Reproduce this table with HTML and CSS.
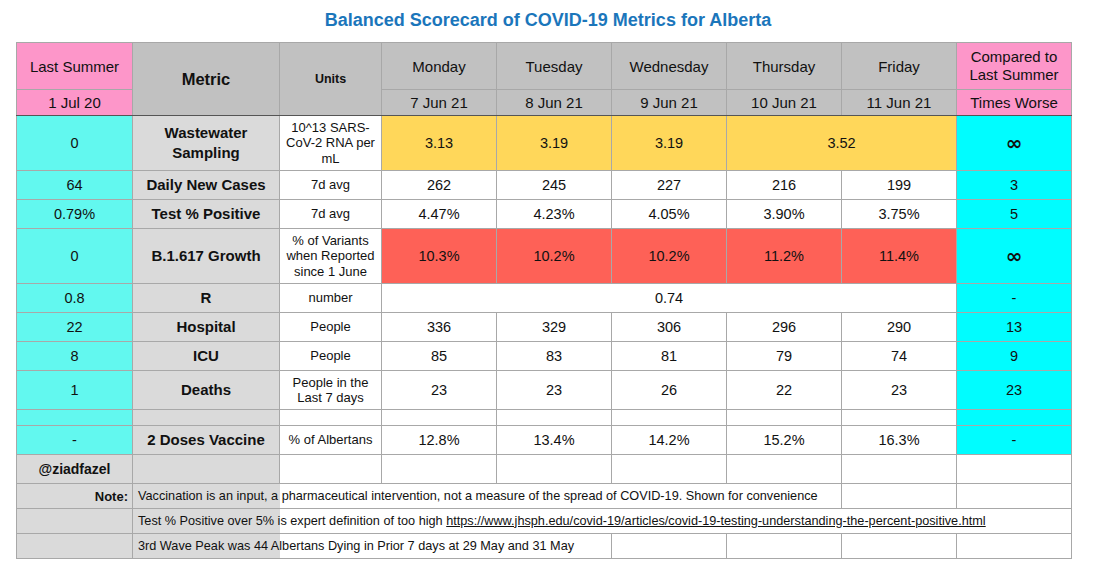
FILE: index.html
```html
<!DOCTYPE html>
<html>
<head>
<meta charset="utf-8">
<link rel="stylesheet" href="styles.css">
</head>
<body>
<h1 class="title">Balanced Scorecard of COVID-19 Metrics for Alberta</h1>
<table class="sheet">
  <colgroup>
    <col class="c-last"><col class="c-metric"><col class="c-units">
    <col class="c-day"><col class="c-day"><col class="c-day"><col class="c-day"><col class="c-day">
    <col class="c-cmp">
  </colgroup>
  <tr class="h1">
    <td class="pink">Last Summer</td>
    <td class="hgrey metric-h" rowspan="2">Metric</td>
    <td class="hgrey units-h" rowspan="2">Units</td>
    <td class="hgrey">Monday</td>
    <td class="hgrey">Tuesday</td>
    <td class="hgrey">Wednesday</td>
    <td class="hgrey">Thursday</td>
    <td class="hgrey">Friday</td>
    <td class="pink">Compared to<br>Last Summer</td>
  </tr>
  <tr class="h2">
    <td class="pink">1 Jul 20</td>
    <td class="hgrey">7 Jun 21</td>
    <td class="hgrey">8 Jun 21</td>
    <td class="hgrey">9 Jun 21</td>
    <td class="hgrey">10 Jun 21</td>
    <td class="hgrey">11 Jun 21</td>
    <td class="pink">Times Worse</td>
  </tr>
  <tr class="r-tall first">
    <td class="aqua">0</td>
    <td class="mname">Wastewater<br>Sampling</td>
    <td class="unit">10^13 SARS-<br>CoV-2 RNA per<br>mL</td>
    <td class="yellow">3.13</td>
    <td class="yellow">3.19</td>
    <td class="yellow">3.19</td>
    <td class="yellow" colspan="2">3.52</td>
    <td class="cyan inf">∞</td>
  </tr>
  <tr class="r">
    <td class="aqua">64</td>
    <td class="mname">Daily New Cases</td>
    <td class="unit">7d avg</td>
    <td>262</td><td>245</td><td>227</td><td>216</td><td>199</td>
    <td class="cyan">3</td>
  </tr>
  <tr class="r">
    <td class="aqua">0.79%</td>
    <td class="mname">Test % Positive</td>
    <td class="unit">7d avg</td>
    <td>4.47%</td><td>4.23%</td><td>4.05%</td><td>3.90%</td><td>3.75%</td>
    <td class="cyan">5</td>
  </tr>
  <tr class="r-tall">
    <td class="aqua">0</td>
    <td class="mname">B.1.617 Growth</td>
    <td class="unit">% of Variants<br>when Reported<br>since 1 June</td>
    <td class="red">10.3%</td><td class="red">10.2%</td><td class="red">10.2%</td><td class="red">11.2%</td><td class="red">11.4%</td>
    <td class="cyan inf">∞</td>
  </tr>
  <tr class="r">
    <td class="aqua">0.8</td>
    <td class="mname">R</td>
    <td class="unit">number</td>
    <td colspan="5">0.74</td>
    <td class="cyan">-</td>
  </tr>
  <tr class="r">
    <td class="aqua">22</td>
    <td class="mname">Hospital</td>
    <td class="unit">People</td>
    <td>336</td><td>329</td><td>306</td><td>296</td><td>290</td>
    <td class="cyan">13</td>
  </tr>
  <tr class="r">
    <td class="aqua">8</td>
    <td class="mname">ICU</td>
    <td class="unit">People</td>
    <td>85</td><td>83</td><td>81</td><td>79</td><td>74</td>
    <td class="cyan">9</td>
  </tr>
  <tr class="r-mid">
    <td class="aqua">1</td>
    <td class="mname">Deaths</td>
    <td class="unit">People in the<br>Last 7 days</td>
    <td>23</td><td>23</td><td>26</td><td>22</td><td>23</td>
    <td class="cyan">23</td>
  </tr>
  <tr class="r-blank">
    <td class="aqua"></td>
    <td class="mname"></td>
    <td></td><td></td><td></td><td></td><td></td><td></td>
    <td class="cyan"></td>
  </tr>
  <tr class="r">
    <td class="aqua">-</td>
    <td class="mname">2 Doses Vaccine</td>
    <td class="unit">% of Albertans</td>
    <td>12.8%</td><td>13.4%</td><td>14.2%</td><td>15.2%</td><td>16.3%</td>
    <td class="cyan">-</td>
  </tr>
  <tr class="r">
    <td class="lgrey handle">@ziadfazel</td>
    <td class="lgrey"></td>
    <td></td><td></td><td></td><td></td><td></td><td></td><td></td>
  </tr>
  <tr class="note">
    <td class="lgrey note-label">Note:</td>
    <td class="lgrey note-text">Vaccination is an input, a pharmaceutical intervention, not a measure of the spread of COVID-19. Shown for convenience</td>
    <td class="join" colspan="5"></td>
    <td></td><td></td>
  </tr>
  <tr class="note">
    <td class="lgrey"></td>
    <td class="lgrey note-text">Test % Positive over 5% is expert definition of too high <a class="link" href="#">https://www.jhsph.edu/covid-19/articles/covid-19-testing-understanding-the-percent-positive.html</a></td>
    <td class="join" colspan="7"></td>
  </tr>
  <tr class="note">
    <td class="lgrey"></td>
    <td class="lgrey note-text">3rd Wave Peak was 44 Albertans Dying in Prior 7 days at 29 May and 31 May</td>
    <td class="join" colspan="3"></td>
    <td></td><td></td><td></td><td></td>
  </tr>
</table>
</body>
</html>
```

FILE: styles.css
```css
html, body {
  margin: 0;
  padding: 0;
  background: #ffffff;
}

body {
  font-family: "Liberation Sans", Arial, Helvetica, sans-serif;
  color: #111111;
}

.title {
  margin: 0;
  padding-top: 10px;
  height: 32px;
  text-align: center;
  font-size: 18px;
  font-weight: bold;
  color: #1b76bb;
  line-height: 21px;
}

.sheet {
  margin-left: 16px;
  border-collapse: collapse;
  table-layout: fixed;
  width: 1055px;
}

.c-last { width: 116px; }
.c-metric { width: 147px; }
.c-units { width: 102px; }
.c-day { width: 115px; }
.c-cmp { width: 115px; }

.sheet td {
  border: 1px solid #a8a8a8;
  padding: 0 4px;
  text-align: center;
  vertical-align: middle;
  font-size: 14.5px;
  line-height: 17px;
  white-space: nowrap;
  overflow: visible;
}

.h1 { height: 47px; }
.h2 { height: 26px; }
.h1 td, .h2 td { font-size: 15px; }
.h2 td { border-bottom: 1px solid #555555; }
.h1 td.pink:last-child { line-height: 18px; }

.metric-h { font-weight: bold; font-size: 16.5px !important; border-bottom: 1px solid #555555 !important; }
.units-h { font-weight: bold; font-size: 12.5px !important; border-bottom: 1px solid #555555 !important; }

.r-tall { height: 55px; }
.r { height: 29px; }
.r-mid { height: 39px; }
.r-blank { height: 16px; }
.note { height: 25px; }

.pink { background: #fd96c9; }
.hgrey { background: #c1c1c1; }
.aqua { background: #62f8ef; }
.cyan { background: #00fdff; }
.yellow { background: #ffd75a; }
.red { background: #fe6157; }
.lgrey { background: #dadada; }

.sheet td.inf {
  font-size: 20px;
  font-weight: bold;
  font-family: "DejaVu Sans", sans-serif;
  line-height: 17px;
}

.mname {
  background: #dadada;
  font-weight: bold;
  font-size: 15px !important;
  line-height: 20px !important;
}

.sheet td.unit {
  font-size: 13px;
  line-height: 15.5px;
}

.handle { font-weight: bold; font-size: 14px !important; }

.note td { font-size: 12px; }
.note-label {
  text-align: right !important;
  font-weight: bold;
  font-size: 13px !important;
}
.sheet td.note-text {
  text-align: left;
  padding-left: 5px;
  border-right: hidden;
  font-size: 12.7px;
}
.sheet td.join {
  border-left: hidden;
}

.link {
  color: #111111;
  text-decoration: underline;
}
```
